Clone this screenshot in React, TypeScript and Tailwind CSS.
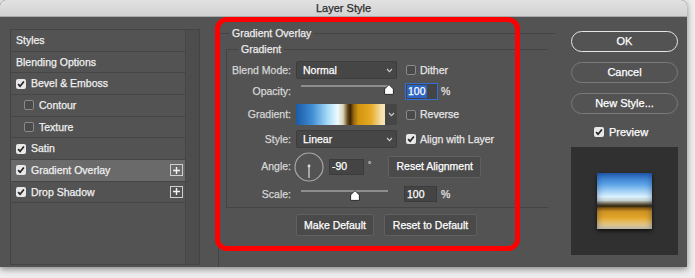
import React from "react";

const Check = ({ checked }: { checked: boolean }) =>
  checked ? (
    <span className="w-[10px] h-[10px] rounded-[2px] bg-[#e8e8e8] flex items-center justify-center shrink-0">
      <svg width="8" height="8" viewBox="0 0 8 8">
        <path d="M1.1 4.1 L3.1 6.2 L6.9 1.5" fill="none" stroke="#262626" strokeWidth="1.7" />
      </svg>
    </span>
  ) : (
    <span className="w-[10px] h-[10px] rounded-[2px] border border-[#8a8a8a] bg-[#4a4a4a] shrink-0" />
  );

const Chevron = () => (
  <svg width="7" height="5" viewBox="0 0 7 5">
    <path d="M1 1 L3.5 3.6 L6 1" fill="none" stroke="#cfcfcf" strokeWidth="1.1" />
  </svg>
);

const Plus = () => (
  <span className="w-[13px] h-[12px] border border-[#cfcfcf] flex items-center justify-center">
    <svg width="9" height="9" viewBox="0 0 9 9">
      <path d="M4.5 1 V8 M1 4.5 H8" stroke="#f2f2f2" strokeWidth="1.4" />
    </svg>
  </span>
);

const Thumb = () => (
  <svg width="10" height="11" viewBox="0 0 10 11">
    <path d="M5 0.6 L9.4 5 L9.4 10.4 L0.6 10.4 L0.6 5 Z" fill="#ffffff" stroke="#2a2a2a" strokeWidth="1" />
  </svg>
);

const ListRow = ({
  label,
  checked,
  indent,
  selected,
  plus,
}: {
  label: string;
  checked?: boolean;
  indent?: boolean;
  selected?: boolean;
  plus?: boolean;
}) => (
  <div
    className={`h-[21.67px] border-b border-[#464646] flex items-center ${
      indent ? "pl-[13px]" : "pl-[5px]"
    } pr-[2px] ${selected ? "bg-[#6a6a6a]" : ""}`}
  >
    {checked !== undefined && <Check checked={checked} />}
    <span className={`${checked !== undefined ? "ml-[5px]" : ""} text-[#f0f0f0] flex-1`}>{label}</span>
    {plus && <Plus />}
  </div>
);

const Select = ({ value }: { value: string }) => (
  <div className="w-[101px] h-[18px] bg-[#464646] border border-[#3d3d3d] rounded-[2px] flex items-center justify-between pl-[6px] pr-[3px] text-white">
    <span>{value}</span>
    <Chevron />
  </div>
);

const Label = ({ children }: { children: React.ReactNode }) => (
  <span className="w-[64px] text-right text-[#d6d6d6] shrink-0 whitespace-nowrap">{children}</span>
);

const RoundBtn = ({ children, primary }: { children: React.ReactNode; primary?: boolean }) => (
  <div
    className={`h-[21px] w-[107px] rounded-full flex items-center justify-center text-white text-[11px] ${
      primary ? "border-[1.5px] border-[#e6e6e6]" : "border border-[#7a7a7a]"
    }`}
  >
    {children}
  </div>
);

const RectBtn = ({ children, w }: { children: React.ReactNode; w: string }) => (
  <div
    className={`${w} h-[22px] bg-[#4a4a4a] border border-[#606060] rounded-[2px] flex items-center justify-center text-white`}
  >
    {children}
  </div>
);

export default function App() {
  return (
    <div className="w-[695px] h-[278px] bg-[#ededed] overflow-hidden font-['Liberation_Sans',Arial,sans-serif] text-[10.5px] leading-none [-webkit-text-stroke:0.25px]">
      <div className="w-[687px] h-[267px] bg-[#535353] rounded-t-[6px] flex flex-col shadow-[0_2px_6px_rgba(0,0,0,0.45)] overflow-hidden">
        {/* title bar */}
        <div className="h-[17px] shrink-0 bg-gradient-to-b from-[#e2e2e2] to-[#d2d2d2] border-b border-[#a9a9a9] flex items-center justify-center text-[11px] text-[#2b2b2b]">
          Layer Style
        </div>

        {/* body */}
        <div className="flex-1 flex relative">
          {/* left list panel */}
          <div className="ml-[10px] mt-[12px] w-[190px] h-[236px] border border-[#444444] flex">
            <div className="w-[175px] border-r border-[#464646] flex flex-col">
              <ListRow label="Styles" />
              <ListRow label="Blending Options" />
              <ListRow label="Bevel & Emboss" checked />
              <ListRow label="Contour" checked={false} indent />
              <ListRow label="Texture" checked={false} indent />
              <ListRow label="Satin" checked />
              <ListRow label="Gradient Overlay" checked selected plus />
              <ListRow label="Drop Shadow" checked plus />
            </div>
            <div className="flex-1 bg-[#4d4d4d]" />
          </div>

          {/* main */}
          <div className="ml-[18px] w-[337px] flex flex-col">
            <fieldset className="mt-[9px] flex-1 border-t border-l border-[#444444] flex flex-col">
              <legend className="ml-[10px] px-[3px] leading-[14px] text-[#ececec]">Gradient Overlay</legend>
              <fieldset className="ml-[7px] mt-[2px] w-[322px] border-t border-l border-b border-[#444444] pb-[5px]">
                <legend className="ml-[11px] px-[3px] leading-[14px] text-[#ececec]">Gradient</legend>

                {/* Blend mode */}
                <div className="mt-[5px] h-[18px] flex items-center">
                  <Label>Blend Mode:</Label>
                  <div className="ml-[5px]">
                    <Select value="Normal" />
                  </div>
                  <div className="ml-[9px] flex items-center">
                    <Check checked={false} />
                    <span className="ml-[4px] text-[#e6e6e6]">Dither</span>
                  </div>
                </div>

                {/* Opacity */}
                <div className="mt-[3px] h-[18px] flex items-center">
                  <Label>Opacity:</Label>
                  <div className="ml-[5px] w-[101px] h-[18px] relative">
                    <div className="ml-[5px] mt-[3px] w-[87px] h-[2px] bg-[#8e8e8e]" />
                    <div className="absolute left-[88px] top-[2px]">
                      <Thumb />
                    </div>
                  </div>
                  <div className="ml-[8px] w-[33px] h-[17px] bg-[#444444] border border-[#2f6fd6] flex items-center pl-[1px]">
                    <span className="bg-[#2d65c6] text-white px-[1px] leading-[13px]">100</span>
                  </div>
                  <span className="ml-[3px] text-[#e0e0e0]">%</span>
                </div>

                {/* Gradient */}
                <div className="mt-[4px] h-[21px] flex items-center">
                  <Label>Gradient:</Label>
                  <div className="ml-[5px] w-[101px] h-[21px] flex">
                    <div className="w-[89px] h-full bg-[linear-gradient(to_right,#1a5aa6_0%,#3f8dd3_18%,#a9dcf7_36%,#eefbff_47%,#d8d2b8_53%,#6a4a1a_58%,#3a2407_61%,#9a6a10_65%,#d1950f_70%,#e6aa24_84%,#f6e4b6_97%)]" />
                    <div className="flex-1 bg-[#464646] flex items-center justify-center">
                      <Chevron />
                    </div>
                  </div>
                  <div className="ml-[9px] flex items-center">
                    <Check checked={false} />
                    <span className="ml-[4px] text-[#e6e6e6]">Reverse</span>
                  </div>
                </div>

                {/* Style */}
                <div className="mt-[5px] h-[18px] flex items-center">
                  <Label>Style:</Label>
                  <div className="ml-[5px]">
                    <Select value="Linear" />
                  </div>
                  <div className="ml-[9px] flex items-center">
                    <Check checked />
                    <span className="ml-[4px] text-[#e6e6e6]">Align with Layer</span>
                  </div>
                </div>

                {/* Angle */}
                <div className="mt-[3px] h-[31px] flex items-center">
                  <Label>Angle:</Label>
                  <svg className="ml-[3px] shrink-0" width="30" height="30" viewBox="0 0 30 30">
                    <circle cx="15" cy="15" r="14" fill="none" stroke="#a8a8a8" strokeWidth="1.2" />
                    <line x1="15" y1="14" x2="15" y2="26" stroke="#d0d0d0" strokeWidth="1.3" />
                    <circle cx="15" cy="14" r="1.4" fill="#e0e0e0" />
                  </svg>
                  <div className="ml-[5px] w-[35px] h-[16px] bg-[#444444] border border-[#3c3c3c] flex items-center pl-[2px] text-white">
                    -90
                  </div>
                  <span className="ml-[4px] self-start mt-[10px] text-[#d0d0d0] text-[8px]">°</span>
                  <div className="ml-[17px]">
                    <RectBtn w="w-[93px]">Reset Alignment</RectBtn>
                  </div>
                </div>

                {/* Scale */}
                <div className="mt-[4px] h-[16px] flex items-center">
                  <Label>Scale:</Label>
                  <div className="ml-[5px] w-[101px] h-[16px] relative">
                    <div className="ml-[5px] mt-[4px] w-[87px] h-[2px] bg-[#8e8e8e]" />
                    <div className="absolute left-[54px] top-[4px]">
                      <Thumb />
                    </div>
                  </div>
                  <div className="ml-[7px] w-[33px] h-[16px] bg-[#444444] border border-[#3c3c3c] flex items-center pl-[2px] text-white">
                    100
                  </div>
                  <span className="ml-[4px] text-[#e0e0e0]">%</span>
                </div>
              </fieldset>

              {/* bottom buttons */}
              <div className="mt-[6px] ml-[77px] flex gap-[10px]">
                <RectBtn w="w-[78px]">Make Default</RectBtn>
                <RectBtn w="w-[93px]">Reset to Default</RectBtn>
              </div>
            </fieldset>
          </div>

          {/* right column */}
          <div className="ml-[16px] w-[108px] flex flex-col">
            <div className="mt-[14px] flex flex-col gap-[10px]">
              <RoundBtn primary>OK</RoundBtn>
              <RoundBtn>Cancel</RoundBtn>
              <RoundBtn>New Style...</RoundBtn>
            </div>
            <div className="mt-[11px] h-[14px] pl-[23px] flex items-center">
              <Check checked />
              <span className="ml-[5px] text-white text-[11px]">Preview</span>
            </div>
            <div className="mt-[8px] w-[107px] h-[108px] bg-[#303030] flex items-center justify-center">
              <div className="w-[55px] h-[56px] bg-[linear-gradient(to_bottom,#2767c0_0%,#5aa3e6_20%,#d9f2ff_42%,#c6d3d2_49%,#6a6048_55%,#2e2410_59%,#8a5e14_63%,#cf9322_69%,#e2a62c_80%,#f4e6c2_100%)] shadow-[inset_0_0_7px_rgba(10,30,90,0.5),0_2px_4px_rgba(0,0,0,0.7)]" />
            </div>
          </div>

          {/* red annotation */}
          <div className="absolute left-[215px] top-0 w-[305px] h-[234px] border-[5px] border-[#ff0000] rounded-[12px] pointer-events-none" />
        </div>
      </div>
    </div>
  );
}
